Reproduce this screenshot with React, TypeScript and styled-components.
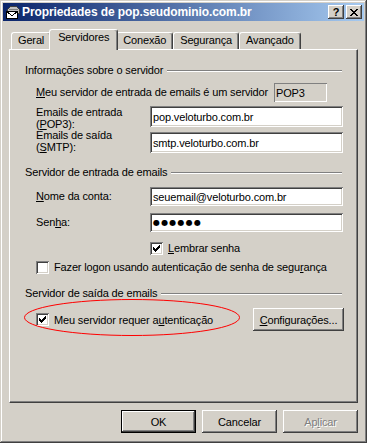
import React from 'react';
import styled, { createGlobalStyle, css } from 'styled-components';

const GlobalStyle = createGlobalStyle`
  html, body {
    margin: 0;
    padding: 0;
    background: #d4d0c8;
  }
  body {
    font-family: 'Liberation Sans', Arial, sans-serif;
    font-size: 11px;
    letter-spacing: -0.15px;
    color: #000000;
  }
`;

const raisedEdge = css`
  box-shadow: inset -1px -1px #404040, inset 1px 1px #ffffff, inset -2px -2px #808080, inset 2px 2px #d4d0c8;
`;

const sunkenEdge = css`
  box-shadow: inset 1px 1px #808080, inset -1px -1px #ffffff, inset 2px 2px #404040, inset -2px -2px #d4d0c8;
`;

const Window = styled.div`
  box-sizing: border-box;
  width: 367px;
  height: 443px;
  padding: 3px;
  display: flex;
  flex-direction: column;
  background: #d4d0c8;
  box-shadow: inset -1px -1px #404040, inset 1px 1px #d4d0c8, inset -2px -2px #808080, inset 2px 2px #ffffff;
`;

const TitleBar = styled.div`
  height: 18px;
  display: flex;
  align-items: center;
  padding: 0 2px;
  background: linear-gradient(to right, #0a246a, #a6caf0);
`;

const TitleText = styled.div`
  flex: 1;
  margin-left: 1px;
  color: #ffffff;
  font-size: 12px;
  font-weight: bold;
  letter-spacing: -0.1px;
  white-space: nowrap;
`;

const CaptionButton = styled.div`
  width: 16px;
  height: 14px;
  box-sizing: border-box;
  margin-left: 2px;
  display: flex;
  align-items: center;
  justify-content: center;
  background: #d4d0c8;
  font-size: 11px;
  font-weight: bold;
  line-height: 14px;
  ${raisedEdge};
`;

const Body = styled.div`
  flex: 1;
  display: flex;
  flex-direction: column;
  padding: 0 6px;
`;

const TabStrip = styled.div`
  height: 20px;
  margin-top: 8px;
  padding-left: 2px;
  display: flex;
  align-items: flex-end;
`;

const Tab = styled.div<{ $active?: boolean }>`
  position: relative;
  z-index: ${(p) => (p.$active ? 1 : 0)};
  box-sizing: border-box;
  height: ${(p) => (p.$active ? 21 : 17)}px;
  margin: 0 ${(p) => (p.$active ? -2 : 0)}px ${(p) => (p.$active ? -1 : 0)}px;
  padding: 1px ${(p) => (p.$active ? 8 : 6)}px 0;
  line-height: 13px;
  white-space: nowrap;
  background: #d4d0c8;
  border-top: 1px solid #ffffff;
  border-left: 1px solid #ffffff;
  border-right: 1px solid #404040;
  border-radius: 3px 3px 0 0;
  box-shadow: inset -1px 0 #808080;
`;

const Panel = styled.div`
  position: relative;
  box-sizing: border-box;
  height: 354px;
  padding: 0 13px 0 15px;
  display: flex;
  flex-direction: column;
  border: 1px solid;
  border-color: #ffffff #404040 #404040 #ffffff;
  box-shadow: inset -1px -1px #808080;
`;

const GroupHeader = styled.div<{ $top: number }>`
  display: flex;
  align-items: center;
  gap: 4px;
  height: 13px;
  margin-top: ${(p) => p.$top}px;
  line-height: 13px;
  white-space: nowrap;

  &::after {
    content: '';
    flex: 1;
    margin: 1px 2px 0 0;
    border-top: 1px solid #808080;
    border-bottom: 1px solid #ffffff;
  }
`;

const FieldRow = styled.div<{ $top: number; $height: number }>`
  display: flex;
  align-items: center;
  height: ${(p) => p.$height}px;
  margin-top: ${(p) => p.$top}px;
  padding-left: 11px;
`;

const FieldLabel = styled.div<{ $width?: number }>`
  width: ${(p) => p.$width ?? 114}px;
  flex-shrink: 0;
  line-height: 13px;
  white-space: nowrap;
`;

const StackedLabel = styled.div<{ $shift: number }>`
  width: 114px;
  flex-shrink: 0;
  align-self: flex-start;
  margin-top: ${(p) => p.$shift}px;
  line-height: 12px;
  white-space: nowrap;
`;

const TextField = styled.div`
  box-sizing: border-box;
  width: 193px;
  height: 100%;
  padding: 0 3px;
  display: flex;
  align-items: center;
  background: #ffffff;
  white-space: nowrap;
  ${sunkenEdge};
`;

const ReadOnlyField = styled.div`
  box-sizing: border-box;
  width: 53px;
  height: 100%;
  padding: 0 2px;
  display: flex;
  align-items: center;
  background: #d4d0c8;
  box-shadow: inset 1px 1px #808080, inset -1px -1px #ffffff;
`;

const PasswordMask = styled.span`
  font-family: 'DejaVu Sans', sans-serif;
  font-size: 8px;
  letter-spacing: 1.2px;
`;

const CheckRow = styled.div<{ $top: number; $indent: number }>`
  display: flex;
  align-items: center;
  gap: 5px;
  height: 13px;
  margin-top: ${(p) => p.$top}px;
  padding-left: ${(p) => p.$indent}px;
  line-height: 13px;
  white-space: nowrap;
`;

const AuthRow = styled.div`
  display: flex;
  align-items: center;
  gap: 5px;
  height: 23px;
  margin-top: 8px;
  padding-left: 11px;
  white-space: nowrap;
`;

const CheckBox = styled.span`
  box-sizing: border-box;
  width: 13px;
  height: 13px;
  padding: 3px;
  flex-shrink: 0;
  display: flex;
  background: #ffffff;
  ${sunkenEdge};
`;

const PushButton = styled.div<{ $width: number; $default?: boolean; $disabled?: boolean }>`
  box-sizing: border-box;
  width: ${(p) => p.$width}px;
  height: 23px;
  display: flex;
  align-items: center;
  justify-content: center;
  background: #d4d0c8;
  white-space: nowrap;
  color: ${(p) => (p.$disabled ? '#808080' : '#000000')};
  text-shadow: ${(p) => (p.$disabled ? '1px 1px #ffffff' : 'none')};
  ${(p) => (p.$default
    ? css`box-shadow: inset 0 0 0 1px #000000, inset -2px -2px #404040, inset 2px 2px #ffffff, inset -3px -3px #808080;`
    : raisedEdge)};
`;

const PushedRight = styled(PushButton)`
  margin-left: auto;
`;

const ButtonRow = styled.div`
  display: flex;
  justify-content: flex-end;
  gap: 6px;
  margin-top: 7px;
`;

const Annotation = styled.svg`
  position: absolute;
  left: 14px;
  top: 249px;
  pointer-events: none;
`;

const Key = styled.span`
  text-decoration: underline;
`;

const CHECK = [
  '......#',
  '.....##',
  '#...###',
  '##.###.',
  '#####..',
  '.###...',
  '..#....',
];

const CLOSE = [
  '##....##',
  '.##..##.',
  '..####..',
  '...##...',
  '..####..',
  '.##..##.',
  '##....##',
];

const PixelArt = ({ rows }: { rows: string[] }): React.ReactElement => (
  <svg width={rows[0].length} height={rows.length} shapeRendering='crispEdges'>
    {rows.flatMap((row, y) => row.split('').map((cell, x) => (
      cell === '#' ? <rect key={`${x}-${y}`} x={x} y={y} width={1} height={1} fill='#000000' /> : null
    )))}
  </svg>
);

const MailIcon = (): React.ReactElement => (
  <svg width={16} height={16} viewBox='0 0 16 16' shapeRendering='crispEdges'>
    <path d='M2.5 9.5 V5.5 L5.5 2.5 H11.5 L14.5 5.5 V9.5 Z' fill='#c0c0c0' stroke='#404040' />
    <path d='M4 5 H13 M4 7 H13' stroke='#808080' />
    <rect x={1.5} y={7.5} width={11} height={7} fill='#ffffff' stroke='#000000' />
    <path d='M1.5 7.5 L7 11.5 L12.5 7.5' fill='none' stroke='#000000' />
  </svg>
);

const Check = (props: { checked?: boolean }): React.ReactElement => (
  <CheckBox>{props.checked && <PixelArt rows={CHECK} />}</CheckBox>
);

const TABS = ['Geral', 'Servidores', 'Conexão', 'Segurança', 'Avançado'];

const App = (): React.ReactElement => (
  <React.Fragment>
    <GlobalStyle />
    <Window>
      <TitleBar>
        <MailIcon />
        <TitleText>Propriedades de pop.seudominio.com.br</TitleText>
        <CaptionButton>?</CaptionButton>
        <CaptionButton><PixelArt rows={CLOSE} /></CaptionButton>
      </TitleBar>
      <Body>
        <TabStrip>
          {TABS.map((tab, index) => (
            <Tab key={tab} $active={index === 1}>{tab}</Tab>
          ))}
        </TabStrip>
        <Panel>
          <GroupHeader $top={14}>Informações sobre o servidor</GroupHeader>
          <FieldRow $top={6} $height={19}>
            <FieldLabel $width={238}><Key>M</Key>eu servidor de entrada de emails é um servidor</FieldLabel>
            <ReadOnlyField>POP3</ReadOnlyField>
          </FieldRow>
          <FieldRow $top={4} $height={21}>
            <StackedLabel $shift={0}>Emails de entrada<br />(<Key>P</Key>OP3):</StackedLabel>
            <TextField>pop.veloturbo.com.br</TextField>
          </FieldRow>
          <FieldRow $top={5} $height={21}>
            <StackedLabel $shift={-3}>Emails de saída<br />(<Key>S</Key>MTP):</StackedLabel>
            <TextField>smtp.veloturbo.com.br</TextField>
          </FieldRow>

          <GroupHeader $top={13}>Servidor de entrada de emails</GroupHeader>
          <FieldRow $top={8} $height={19}>
            <FieldLabel><Key>N</Key>ome da conta:</FieldLabel>
            <TextField>seuemail@veloturbo.com.br</TextField>
          </FieldRow>
          <FieldRow $top={7} $height={19}>
            <FieldLabel>Sen<Key>h</Key>a:</FieldLabel>
            <TextField><PasswordMask>●●●●●●</PasswordMask></TextField>
          </FieldRow>
          <CheckRow $top={10} $indent={125}>
            <Check checked={true} />
            <span><Key>L</Key>embrar senha</span>
          </CheckRow>
          <CheckRow $top={6} $indent={11}>
            <Check />
            <span>Fazer logon usando autenticação de senha de segu<Key>r</Key>ança</span>
          </CheckRow>

          <GroupHeader $top={13}>Servidor de saída de emails</GroupHeader>
          <AuthRow>
            <Check checked={true} />
            <span>Meu servidor requer a<Key>u</Key>tenticação</span>
            <PushedRight $width={91}><Key>C</Key>onfigurações...</PushedRight>
          </AuthRow>
          <Annotation width={217} height={38} viewBox='0 0 217 38'>
            <ellipse cx={108} cy={18.5} rx={107.5} ry={18} fill='none' stroke='#ff0000' strokeWidth={1} />
          </Annotation>
        </Panel>
        <ButtonRow>
          <PushButton $width={75} $default={true}>OK</PushButton>
          <PushButton $width={75}>Cancelar</PushButton>
          <PushButton $width={75} $disabled={true}>Ap<Key>l</Key>icar</PushButton>
        </ButtonRow>
      </Body>
    </Window>
  </React.Fragment>
);

export default App;
